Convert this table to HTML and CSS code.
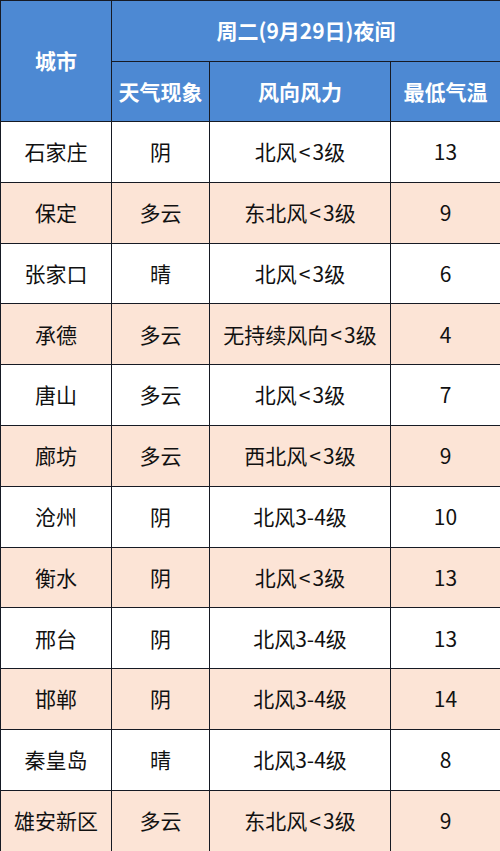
FILE: index.html
```html
<!DOCTYPE html>
<html lang="zh-CN">
<head>
<meta charset="utf-8">
<title>天气预报</title>
<link rel="stylesheet" href="styles.css">
</head>
<body>
<table class="weather">
  <colgroup>
    <col class="c-city">
    <col class="c-sky">
    <col class="c-wind">
    <col class="c-temp">
  </colgroup>
  <thead>
    <tr class="h1">
      <th rowspan="2">城市</th>
      <th colspan="3">周二(9月29日)夜间</th>
    </tr>
    <tr class="h2">
      <th>天气现象</th>
      <th>风向风力</th>
      <th>最低气温</th>
    </tr>
  </thead>
  <tbody>
    <tr><td>石家庄</td><td>阴</td><td>北风<span class="lt">&lt;</span>3级</td><td>13</td></tr>
    <tr class="alt"><td>保定</td><td>多云</td><td>东北风<span class="lt">&lt;</span>3级</td><td>9</td></tr>
    <tr><td>张家口</td><td>晴</td><td>北风<span class="lt">&lt;</span>3级</td><td>6</td></tr>
    <tr class="alt"><td>承德</td><td>多云</td><td>无持续风向<span class="lt">&lt;</span>3级</td><td>4</td></tr>
    <tr><td>唐山</td><td>多云</td><td>北风<span class="lt">&lt;</span>3级</td><td>7</td></tr>
    <tr class="alt"><td>廊坊</td><td>多云</td><td>西北风<span class="lt">&lt;</span>3级</td><td>9</td></tr>
    <tr><td>沧州</td><td>阴</td><td>北风3-4级</td><td>10</td></tr>
    <tr class="alt"><td>衡水</td><td>阴</td><td>北风<span class="lt">&lt;</span>3级</td><td>13</td></tr>
    <tr><td>邢台</td><td>阴</td><td>北风3-4级</td><td>13</td></tr>
    <tr class="alt"><td>邯郸</td><td>阴</td><td>北风3-4级</td><td>14</td></tr>
    <tr><td>秦皇岛</td><td>晴</td><td>北风3-4级</td><td>8</td></tr>
    <tr class="alt"><td>雄安新区</td><td>多云</td><td>东北风<span class="lt">&lt;</span>3级</td><td>9</td></tr>
  </tbody>
</table>
</body>
</html>
```

FILE: styles.css
```css
html, body {
  margin: 0;
  padding: 0;
  background: #ffffff;
}

.weather {
  width: 500px;
  height: 851px;
  border-collapse: collapse;
  table-layout: fixed;
  font-family: "Noto Sans CJK SC", "Noto Sans", sans-serif;
  font-size: 21px;
  color: #111111;
  border: 1.5px solid #141a2a;
}

.c-city { width: 111px; }
.c-sky { width: 98px; }
.c-wind { width: 181px; }
.c-temp { width: 110px; }

.weather th,
.weather td {
  border: 1px solid #161a24;
  text-align: center;
  vertical-align: middle;
  padding: 0;
  line-height: 1.2;
}

.weather th {
  background: #4d89d3;
  color: #ffffff;
  font-weight: 700;
}

.weather .h1 { height: 61px; }
.weather .h2 { height: 60px; }

.weather tbody tr { height: 60.8px; }

.weather tbody tr.alt td {
  background: #fce4d6;
}

.lt {
  padding: 0 2px;
}
```
